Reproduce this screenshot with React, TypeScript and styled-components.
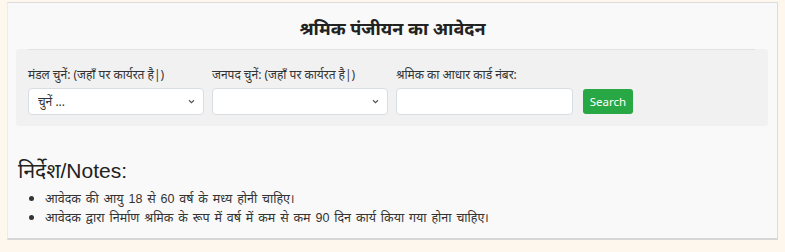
import React from "react";
import styled, { createGlobalStyle } from "styled-components";

const GlobalStyle = createGlobalStyle`
  html, body {
    margin: 0;
    padding: 0;
    background: #fdf7ee;
  }
  body {
    font-family: "Noto Sans", "Liberation Sans", sans-serif;
    color: #333;
  }
`;

const Panel = styled.div`
  margin: 2px 7px 0 7px;
  height: 238px;
  box-sizing: border-box;
  background: #f9f9f9;
  border: 1px solid #dcdcdc;
  border-left-color: #ececec;
  border-bottom: 2px solid #d6d6d6;
`;

const Title = styled.h2`
  margin: 0;
  height: 46px;
  display: flex;
  align-items: center;
  justify-content: center;
  padding-top: 3px;
  box-sizing: border-box;
  font-size: 18px;
  font-weight: 700;
  color: #222;
`;

const FormBox = styled.div`
  margin: 0 9px 0 8px;
  background: #f1f1f1;
  border-radius: 3px;
  padding: 0 0 11px 0;
`;

const Divider = styled.div`
  height: 1px;
  margin: 0 13px 0 12px;
  background: #e2e2e2;
`;

const Row = styled.div`
  display: flex;
  align-items: flex-end;
  gap: 8px;
  padding: 16px 12px 0 12px;
`;

const Field = styled.div`
  display: flex;
  flex-direction: column;
  width: ${(p: { $w: number }) => p.$w}px;
`;

const Label = styled.label`
  font-size: 12px;
  line-height: 18px;
  margin-bottom: 4px;
  color: #333;
  white-space: nowrap;
`;

const SelectWrap = styled.div`
  position: relative;
`;

const Select = styled.select`
  appearance: none;
  width: 100%;
  height: 27px;
  box-sizing: border-box;
  background: #fff;
  border: 1px solid #d8dde2;
  border-radius: 4px;
  padding: 0 24px 0 9px;
  font-family: "Noto Sans", "Liberation Sans", sans-serif;
  font-size: 12px;
  color: #333;
`;

const Chevron = styled.svg`
  position: absolute;
  right: 9px;
  top: 11px;
  width: 7px;
  height: 5px;
  pointer-events: none;
`;

const Input = styled.input`
  width: 100%;
  height: 27px;
  box-sizing: border-box;
  background: #fff;
  border: 1px solid #d8dde2;
  border-radius: 4px;
`;

const Button = styled.button`
  margin-left: 2px;
  margin-bottom: 1px;
  width: 50px;
  height: 25px;
  border: none;
  border-radius: 3px;
  background: #28a745;
  color: #fff;
  font-family: "Noto Sans", "Liberation Sans", sans-serif;
  font-size: 11.5px;
  padding: 0;
`;

const Notes = styled.div`
  padding: 32px 0 0 10px;
`;

const NotesTitle = styled.h3`
  margin: 0 0 5px 0;
  font-family: "Liberation Sans", "Noto Sans", sans-serif;
  font-weight: 400;
  font-size: 21px;
  line-height: 26px;
  color: #222;
`;

const List = styled.ul`
  margin: 0;
  padding-left: 27px;
  font-family: "Liberation Sans", "Noto Sans", sans-serif;
  font-size: 12.5px;
  line-height: 17px;
  color: #333;
  word-spacing: 1.4px;

  li::marker {
    font-size: 15px;
  }
`;

const Arrow = () => (
  <Chevron viewBox="0 0 8 6">
    <path d="M1 1.5 L4 4.5 L7 1.5" fill="none" stroke="#555" strokeWidth="1.4" />
  </Chevron>
);

export default function App() {
  return (
    <>
      <GlobalStyle />
      <Panel>
        <Title>श्रमिक पंजीयन का आवेदन</Title>
        <FormBox>
          <Divider />
          <Row>
            <Field $w={176}>
              <Label>मंडल चुनें: (जहाँ पर कार्यरत है|)</Label>
              <SelectWrap>
                <Select defaultValue="">
                  <option value="">चुनें ...</option>
                </Select>
                <Arrow />
              </SelectWrap>
            </Field>
            <Field $w={176}>
              <Label>जनपद चुनें: (जहाँ पर कार्यरत है|)</Label>
              <SelectWrap>
                <Select defaultValue="">
                  <option value=""></option>
                </Select>
                <Arrow />
              </SelectWrap>
            </Field>
            <Field $w={177}>
              <Label>श्रमिक का आधार कार्ड नंबर:</Label>
              <Input type="text" />
            </Field>
            <Button type="button">Search</Button>
          </Row>
        </FormBox>
        <Notes>
          <NotesTitle>निर्देश/Notes:</NotesTitle>
          <List>
            <li>आवेदक की आयु 18 से 60 वर्ष के मध्य होनी चाहिए।</li>
            <li>आवेदक द्वारा निर्माण श्रमिक के रूप में वर्ष में कम से कम 90 दिन कार्य किया गया होना चाहिए।</li>
          </List>
        </Notes>
      </Panel>
    </>
  );
}
